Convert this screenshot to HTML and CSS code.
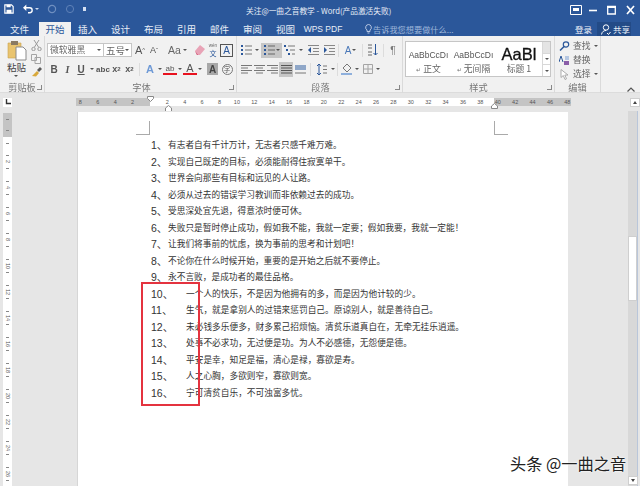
FILE: index.html
```html
<!DOCTYPE html>
<html lang="zh">
<head>
<meta charset="utf-8">
<title>Word</title>
<link rel="stylesheet" href="styles.css">
</head>
<body>
<div class="app">
  <header class="blue">
    <div class="titlebar">
      <div class="qat">
        <svg width="10" height="10" viewBox="0 0 12 12"><path d="M1 1h8l2 2v8H1z" fill="none" stroke="#fff" stroke-width="1.4"/><path d="M3 1h5v3H3zM3 7h6v4H3z" fill="#fff"/></svg>
        <svg class="q-undo" width="10" height="10" viewBox="0 0 12 11"><path d="M3 4h5a3 3 0 0 1 0 6H6" fill="none" stroke="#fff" stroke-width="1.6"/><path d="M0 4l4-4v8z" fill="#fff"/></svg>
        <span class="q-caret"></span>
        <svg class="q-redo" width="10" height="10" viewBox="0 0 10 10"><circle cx="5" cy="5" r="3.6" fill="none" stroke="#6f8fc0" stroke-width="1.2"/></svg>
        <svg class="q-rep" width="10" height="10" viewBox="0 0 10 10"><circle cx="5" cy="5" r="3.6" fill="none" stroke="#5f82b8" stroke-width="1"/></svg>
        <span class="q-more"></span>
      </div>
      <div class="doc-title">关注@一曲之音教学 - Word(产品激活失败)</div>
      <div class="winbtns">
        <svg width="12" height="10" viewBox="0 0 12 10"><path d="M.5.5h11v9H.5z" fill="none" stroke="#fff"/><path d="M3 3h6v3H3z" fill="#fff"/></svg>
        <svg width="8" height="10" viewBox="0 0 8 10"><path d="M0 5.5h8" stroke="#fff" stroke-width="1.6"/></svg>
        <svg width="9" height="10" viewBox="0 0 9 10"><path d="M.7 1.5h7.6v7.5H.7z" fill="none" stroke="#fff" stroke-width="1.3"/><path d="M0 1h9v2H0z" fill="#fff"/></svg>
        <svg width="9" height="10" viewBox="0 0 9 10"><path d="M1 1l7 8M8 1l-7 8" stroke="#fff" stroke-width="1.7"/></svg>
      </div>
    </div>
    <nav class="tabs">
      <span class="tab t-file">文件</span>
      <span class="tab active">开始</span>
      <span class="tab">插入</span>
      <span class="tab">设计</span>
      <span class="tab">布局</span>
      <span class="tab">引用</span>
      <span class="tab">邮件</span>
      <span class="tab">审阅</span>
      <span class="tab">视图</span>
      <span class="tab t-wps">WPS PDF</span>
      <span class="tell">
        <svg width="7" height="10" viewBox="0 0 7 10"><path d="M3.5.5a3 3 0 0 1 1.5 5.500v1.500H2V6A3 3 0 0 1 3.500.5zM2.500 9h2" fill="none" stroke="#c5d3ea" stroke-width=".9"/></svg>
        告诉我您想要做什么...
      </span>
      <span class="login">登录</span>
      <span class="share">
        <svg width="10" height="11" viewBox="0 0 10 11"><circle cx="5" cy="3.500" r="2.700" fill="none" stroke="#fff"/><path d="M.5 10.500C1 7.500 3 6.500 5 6.500M6 9l1.500 1.500L9.500 8" fill="none" stroke="#fff"/></svg>
        共享
      </span>
    </nav>
  </header>

  <section class="ribbon">
    <div class="group g-clip">
      <div class="clip-body">
        <div class="paste">
          <svg width="20" height="21" viewBox="0 0 20 21"><path d="M1 3h13v15H1z" fill="#e9c46f" stroke="#c9a24f" stroke-width=".6"/><path d="M4 1h7v4H4z" fill="#8a7a62"/><path d="M9 7h7l3 3v10H9z" fill="#fff" stroke="#8b8b8b"/></svg>
          <span>粘贴</span>
          <i class="caret"></i>
        </div>
        <div class="clip-tools">
          <svg width="11" height="11" viewBox="0 0 11 11"><path d="M3 0l4.500 7M8 0L3.500 7" stroke="#9a9a9a" fill="none"/><circle cx="2.500" cy="9" r="1.700" fill="none" stroke="#9a9a9a"/><circle cx="8.500" cy="9" r="1.700" fill="none" stroke="#9a9a9a"/></svg>
          <svg width="10" height="10" viewBox="0 0 10 10"><path d="M.5.500h5v6h-5zM4 3.500h5.500v6H4z" fill="#f4f4f4" stroke="#a5a5a5"/></svg>
          <svg width="11" height="10" viewBox="0 0 11 10"><path d="M1 9l5-5 2 2-3 3.500z" fill="#d9a93c"/><path d="M6 3l3-3 2 2-3 3z" fill="#5a5a5a"/></svg>
        </div>
      </div>
      <div class="g-label"><span></span><span>剪贴板</span><i class="launch"></i></div>
    </div>

    <div class="group g-font">
      <div class="rows">
        <div class="row">
          <div class="combo c-font">微软雅黑<i class="caret"></i></div>
          <div class="combo c-size">五号<i class="caret"></i></div>
          <span class="cell w14 tx big">A<sup>^</sup></span>
          <span class="cell w14 tx small">A<sup>ˇ</sup></span>
          <span class="cell w27 tx aa">Aa<i class="caret"></i></span>
          <span class="cell w13"><svg width="12" height="12" viewBox="0 0 12 12"><path d="M1 7l5-6 5 4-5 6H3z" fill="#e8a3b6"/><path d="M1 7l3 4H3z" fill="#c46"/></svg></span>
          <span class="cell w14 wen"><small>wén</small><span>文</span></span>
          <span class="cell w13 boxed">A</span>
        </div>
        <div class="row">
          <span class="cell w14 tx b">B</span>
          <span class="cell w13 tx it">I</span>
          <span class="cell w14 tx un">U</span>
          <span class="cell w8"><i class="caret"></i></span>
          <span class="cell w14 tx abc">abc</span>
          <span class="cell w13 tx sb">x<sub>2</sub></span>
          <span class="cell w13 tx sb">x<sup>2</sup></span>
          <span class="sep"></span>
          <span class="cell w14 tx fx">A</span>
          <span class="cell w6"><i class="caret"></i></span>
          <span class="cell w14 tx hl">ab</span>
          <span class="cell w6"><i class="caret"></i></span>
          <span class="cell w14 tx fc">A</span>
          <span class="cell w6"><i class="caret"></i></span>
          <span class="cell w13 tx gray">A</span>
          <span class="cell w14"><span class="circ">字</span></span>
        </div>
      </div>
      <div class="g-label"><span></span><span>字体</span><i class="launch"></i></div>
    </div>

    <div class="group g-para">
      <div class="rows">
        <div class="row">
          <span class="cell w14"><svg width="11" height="10" viewBox="0 0 11 10"><path d="M0 0h2v2H0zM0 4h2v2H0zM0 8h2v2H0z" fill="#2b579a"/><path d="M4 1h7M4 5h7M4 9h7" stroke="#777"/></svg></span>
          <span class="cell w8"><i class="caret"></i></span>
          <span class="cell w21 on"><svg width="11" height="10" viewBox="0 0 11 10"><path d="M0 0h2v2H0zM0 4h2v2H0zM0 8h2v2H0z" fill="#2b579a"/><path d="M4 1h7M4 5h7M4 9h7" stroke="#666"/></svg><i class="caret"></i></span>
          <span class="cell w15"><svg width="11" height="10" viewBox="0 0 11 10"><path d="M0 0h2v2H0zM2 4h2v2H2zM4 8h2v2H4z" fill="#2b579a"/><path d="M4 1h7M6 5h5M8 9h3" stroke="#777"/></svg></span>
          <span class="cell w8"><i class="caret"></i></span>
          <span class="cell w16"><svg width="11" height="10" viewBox="0 0 11 10"><path d="M0 5l3-3v6z" fill="#2b579a"/><path d="M0 .5h11M5 3.500h6M5 6.500h6M0 9.500h11" stroke="#888"/></svg></span>
          <span class="cell w16"><svg width="11" height="10" viewBox="0 0 11 10"><path d="M3 5L0 2v6z" fill="#2b579a"/><path d="M0 .5h11M5 3.500h6M5 6.500h6M0 9.500h11" stroke="#888"/></svg></span>
          <span class="sep sep-n"></span>
          <span class="cell w21 tx ab2">A<i class="caret"></i></span>
          <span class="sep sep-n"></span>
          <span class="cell w18"><svg width="10" height="12" viewBox="0 0 10 12"><path d="M7.500 0v11M5.500 9l2 2 2-2" fill="none" stroke="#2b579a"/><path d="M0 1h4M0 4h4M0 8h4M0 11h4" stroke="#666"/></svg></span>
          <span class="sep sep-n"></span>
          <span class="cell w16 tx pil">¶</span>
        </div>
        <div class="row">
          <span class="cell w14"><svg width="11" height="9" viewBox="0 0 11 9"><path d="M0 .5h11M0 3h7M0 5.500h11M0 8h7" stroke="#777"/></svg></span>
          <span class="cell w13"><svg width="11" height="9" viewBox="0 0 11 9"><path d="M0 .5h11M2 3h7M0 5.500h11M2 8h7" stroke="#777"/></svg></span>
          <span class="cell w13"><svg width="11" height="9" viewBox="0 0 11 9"><path d="M0 .5h11M4 3h7M0 5.500h11M4 8h7" stroke="#777"/></svg></span>
          <span class="cell w14 on"><svg width="11" height="9" viewBox="0 0 11 9"><path d="M0 .5h11M0 3h11M0 5.500h11M0 8h11" stroke="#555"/></svg></span>
          <span class="cell w14"><svg width="11" height="9" viewBox="0 0 11 9"><path d="M0 0h11v5H0z" fill="#8fa7c8"/><path d="M0 8h11" stroke="#777"/></svg></span>
          <span class="sep"></span>
          <span class="cell w16"><svg width="10" height="11" viewBox="0 0 10 11"><path d="M2 0v11M0 2l2-2 2 2M0 9l2 2 2-2" fill="none" stroke="#2b579a"/><path d="M6 2h4M6 5.500h4M6 9h4" stroke="#777"/></svg></span>
          <span class="cell w6"><i class="caret"></i></span>
          <span class="sep sep-n"></span>
          <span class="cell w14"><svg width="11" height="12" viewBox="0 0 11 12"><path d="M2 5l4-4 4 4-4 4z" fill="none" stroke="#777"/><path d="M0 10h11v2H0z" fill="#8fb0dc"/></svg></span>
          <span class="cell w8"><i class="caret"></i></span>
          <span class="cell w13"><svg width="10" height="10" viewBox="0 0 10 10"><path d="M.5.500h9v9h-9zM5 .5v9M.5 5h9" fill="none" stroke="#a5a5a5"/></svg></span>
          <span class="cell w8"><i class="caret"></i></span>
        </div>
      </div>
      <div class="g-label"><span></span><span>段落</span><i class="launch"></i></div>
    </div>

    <div class="group g-style">
      <div class="gallery">
        <div class="g-items">
          <div class="g-item"><span class="aa-s">AaBbCcDı</span><span class="g-name"><em>↵</em>正文</span></div>
          <div class="g-item"><span class="aa-s">AaBbCcDı</span><span class="g-name"><em>↵</em>无间隔</span></div>
          <div class="g-item"><span class="aa-b">AaBl</span><span class="g-name">标题 1</span></div>
        </div>
        <div class="g-scroll">
          <span class="g-up"></span><span><i class="caret"></i></span><span class="g-more"><i class="caret"></i></span>
        </div>
      </div>
      <div class="g-label"><span></span><span>样式</span><i class="launch"></i></div>
    </div>

    <div class="group g-edit">
      <div class="edit-rows">
        <div class="ed"><svg width="10" height="10" viewBox="0 0 10 10"><circle cx="6.500" cy="3.500" r="2.700" fill="none" stroke="#2b579a" stroke-width="1.200"/><path d="M4.500 5.500L.5 9.500" stroke="#2b579a" stroke-width="1.500"/></svg><span>查找</span><i class="caret"></i></div>
        <div class="ed"><svg width="11" height="11" viewBox="0 0 11 11"><path d="M0 7l2-6 2 6" fill="none" stroke="#2b579a"/><path d="M6 1h4v4H6z" fill="#b5c7e2"/><path d="M5 6h5v4H5z" fill="#8b5ea8"/></svg><span>替换</span></div>
        <div class="ed"><svg width="9" height="11" viewBox="0 0 9 11"><path d="M1 .5v8l2.300-2 1.700 4 1.500-.7-1.700-3.800H8z" fill="#fff" stroke="#999" stroke-width=".8"/></svg><span>选择</span><i class="caret"></i></div>
      </div>
      <div class="g-label g-label-c">编辑</div>
    </div>
    <div class="ribbon-end"><svg width="8" height="5" viewBox="0 0 8 5"><path d="M.5 4.500L4 1l3.500 3.500" fill="none" stroke="#555" stroke-width="1.200"/></svg></div>
  </section>

  <div class="ruler-row">
    <span class="tabstop"><svg width="6" height="6" viewBox="0 0 6 6"><path d="M1.500 0v4.500H6" fill="none" stroke="#333" stroke-width="1.400"/></svg></span>
    <div class="ruler">
      <div class="ruler-nums">
        <span>8</span><span>6</span><span>4</span><span>2</span><span></span><span>2</span><span>4</span><span>6</span><span>8</span><span>10</span><span>12</span><span>14</span><span>16</span><span>18</span><span>20</span><span>22</span><span>24</span><span>26</span><span>28</span><span>30</span><span>32</span><span>34</span><span>36</span><span>38</span><span>40</span><span>42</span><span>44</span><span>46</span><span>48</span>
      </div>
      <svg class="m-top" width="7" height="6" viewBox="0 0 7 6"><path d="M.5.500h6v2L3.500 5.500.5 2.500z" fill="#fff" stroke="#888"/></svg>
      <svg class="m-bot" width="7" height="7" viewBox="0 0 7 7"><path d="M.5 3L3.500.5 6.500 3v3.500h-6z" fill="#fff" stroke="#888"/></svg>
      <svg class="m-right" width="7" height="6" viewBox="0 0 7 6"><path d="M.5 3L3.500.5 6.500 3v2.500h-6z" fill="#fff" stroke="#888"/></svg>
    </div>
    <span class="sb-btn"><i class="up"></i></span>
  </div>

  <main class="work">
    <aside class="vruler">
      <span class="v-gray"></span>
      <span class="v-blank"></span>
      <span>2</span><span>4</span><span>6</span><span>8</span><span>10</span><span>12</span><span>14</span><span>16</span><span>18</span><span>20</span><span>22</span><span>24</span><span>26</span>
    </aside>
    <article class="page">
      <div class="crops"><i class="crop-l"></i><i class="crop-r"></i></div>
      <ol class="list">
        <li><b>1、</b>有志者自有千计万计，无志者只感千难万难。</li>
        <li><b>2、</b>实现自己既定的目标，必须能耐得住寂寞单干。</li>
        <li><b>3、</b>世界会向那些有目标和远见的人让路。</li>
        <li><b>4、</b>必须从过去的错误学习教训而非依赖过去的成功。</li>
        <li><b>5、</b>受思深处宜先退，得意浓时便可休。</li>
        <li><b>6、</b>失败只是暂时停止成功，假如我不能，我就一定要；假如我要，我就一定能！</li>
        <li><b>7、</b>让我们将事前的忧虑，换为事前的思考和计划吧！</li>
        <li><b>8、</b>不论你在什么时候开始，重要的是开始之后就不要停止。</li>
        <li><b>9、</b>永不言败，是成功者的最佳品格。</li>
        <li class="wide"><b>10、</b>一个人的快乐，不是因为他拥有的多，而是因为他计较的少。</li>
        <li class="wide"><b>11、</b>生气，就是拿别人的过错来惩罚自己。原谅别人，就是善待自己。</li>
        <li class="wide"><b>12、</b>未必钱多乐便多，财多累己招烦恼。清贫乐道真自在，无牵无挂乐逍遥。</li>
        <li class="wide"><b>13、</b>处事不必求功，无过便是功。为人不必感德，无怨便是德。</li>
        <li class="wide"><b>14、</b>平安是幸，知足是福，清心是禄，寡欲是寿。</li>
        <li class="wide"><b>15、</b>人之心胸，多欲则窄，寡欲则宽。</li>
        <li class="wide"><b>16、</b>宁可清贫自乐，不可浊富多忧。</li>
      </ol>
    </article>
    <div class="vscroll">
      <span class="thumb"></span>
      <span class="sb-btn sb-down"><i class="down"></i></span>
    </div>
    <div class="redbox"></div>
    <div class="watermark">头条 @一曲之音</div>
  </main>
</div>
</body>
</html>
```

FILE: styles.css
```css
* { box-sizing: border-box; }
html, body { margin: 0; padding: 0; }
body {
  width: 640px; height: 486px; overflow: hidden;
  font-family: "Noto Sans CJK SC", "Liberation Sans", sans-serif;
  color: #444; background: #e6e6e6;
}
.app { width: 640px; height: 486px; display: flex; flex-direction: column; overflow: hidden; filter: blur(.35px); }
i, em { font-style: normal; }

/* title + tabs */
.blue { background: #2b579a; color: #fff; height: 36px; flex: none; }
.titlebar { height: 22px; display: grid; grid-template-columns: 246px 1fr auto; align-items: center; }
.qat { display: flex; align-items: center; padding: 0 0 4px 4px; }
.q-undo { margin-left: 9px; }
.q-caret { width: 0; height: 0; border: 2px solid transparent; border-top: 2.500px solid #cfdcf0; margin: 2px 0 0 2px; }
.q-redo { margin-left: 8px; }
.q-rep { margin-left: 8px; }
.q-more { width: 3px; height: 4px; background: #d5e0f2; margin-left: 8px; }
.doc-title { font-size: 7.700px; line-height: 12px; color: #e6ecf6; white-space: nowrap; }
.winbtns { display: flex; align-items: center; gap: 10px; padding: 0 5px 3px 0; }
.winbtns svg:first-child { margin-right: -3px; }

.tabs { height: 14px; display: flex; align-items: stretch; font-size: 9.500px; line-height: 14px; color: #e8eef7; }
.tab { width: 33px; text-align: center; white-space: nowrap; }
.t-file { width: 39px; }
.tab.active { width: 32px; background: #f1f1f1; color: #2b579a; }
.t-wps { width: 50px; padding: 0 8px 0 0; font-family: "Liberation Sans", sans-serif; font-size: 8.500px; }
.tell { display: flex; align-items: center; gap: 1px; margin-left: 13px; width: 210px; color: #9fb7da; font-size: 8.200px; white-space: nowrap; }
.login { width: 22px; font-size: 8.500px; text-align: left; color: #f2f5fa; white-space: nowrap; }
.share { width: 34px; display: flex; align-items: center; gap: 2px; background: #234b87; padding-left: 4px; font-size: 8.500px; white-space: nowrap; }

/* ribbon */
.ribbon { height: 57px; flex: none; background: #f1f1f1; display: flex; border-bottom: 1px solid #dcdcdc; font-size: 9.500px; }
.group { display: flex; flex-direction: column; justify-content: space-between; border-right: 1px solid #dadada; margin-bottom: -1px; }
.g-clip { width: 45px; }
.g-font { width: 192px; padding-left: 2px; }
.g-para { width: 166px; padding-left: 2px; }
.g-style { width: 152px; }
.g-edit { width: 46px; }
.ribbon-end { flex: 1; display: flex; align-items: flex-end; justify-content: flex-end; padding: 0 5px 0 0; }
.g-label { height: 12px; line-height: 12px; font-size: 9.200px; color: #777; display: grid; grid-template-columns: 1fr auto 1fr; align-items: center; white-space: nowrap; }
.g-label-c { display: block; text-align: center; }
.launch { justify-self: end; margin-right: 2px; width: 5px; height: 5px; border-left: 1px solid #888; border-bottom: 1px solid #888; transform: scaleX(-1); }

.caret { display: inline-block; width: 0; height: 0; border: 2px solid transparent; border-top: 2.500px solid #555; border-bottom: 0; }

.clip-body { display: flex; padding: 4px 0 0 7px; gap: 3px; }
.paste { width: 21px; display: flex; flex-direction: column; align-items: flex-start; font-size: 9.500px; line-height: 12px; color: #444; }
.paste .caret { margin: 2px 0 0 7px; }
.clip-tools { display: flex; flex-direction: column; gap: 3px; }

.rows { display: flex; flex-direction: column; gap: 5px; padding-top: 7px; }
.row { display: flex; align-items: center; height: 14px; }
.cell { height: 15px; display: flex; align-items: center; justify-content: center; flex: none; }
.w6 { width: 6px; } .w8 { width: 8px; } .w13 { width: 13px; } .w14 { width: 14px; } .w15 { width: 15px; } .w16 { width: 16px; }
.w18 { width: 18px; } .w21 { width: 21px; gap: 1px; } .w27 { width: 27px; gap: 2px; margin-left: 5px; justify-content: flex-start; padding-left: 2px; }
.sep { width: 1px; height: 13px; background: #dcdcdc; margin: 0 3px; flex: none; }
.sep-n { margin: 0 1px; }
.on { background: #c6c6c6; }
.combo { height: 14px; background: #fff; border: 1px solid #c6c6c6; display: flex; align-items: center; justify-content: space-between; padding: 0 2px; font-size: 8.800px; line-height: 12px; white-space: nowrap; color: #666; flex: none; }
.c-font { width: 57px; }
.c-size { width: 29px; margin-left: -1px; font-size: 9.500px; margin-right: 1px; }
.tx { font-family: "Liberation Sans", sans-serif; color: #555; font-size: 10px; }
.tx sup, .tx sub { font-size: 6px; line-height: 6px; }
.big { font-size: 11px; }
.small { font-size: 9px; }
.aa { font-size: 10.500px; color: #666; }
.wen { flex-direction: column; font-size: 7px; line-height: normal; color: #2b579a; justify-content: center; }
.wen small { font-size: 4.500px; line-height: normal; color: #666; font-family: "Liberation Sans", sans-serif; }
.boxed { border: 1px solid #555; font-family: "Liberation Sans", sans-serif; font-size: 10px; height: 13px; color: #2b579a; }
.b { font-weight: 700; }
.it { font-style: italic; font-family: "Liberation Serif", serif; font-weight: 700; }
.un { text-decoration: underline; font-weight: 700; }
.abc { font-size: 8px; font-weight: 700; }
.sb { font-size: 9px; font-weight: 700; }
.fx { color: #6f9ad6; font-size: 11px; font-weight: 700; }
.hl { font-size: 8px; color: #555; border-bottom: 2.500px solid #e8121f; height: 12px; line-height: 9px; }
.fc { font-size: 11px; color: #555; border-bottom: 2.500px solid #e8121f; height: 12px; line-height: 9px; }
.gray { background: #a8a8a8; color: #444; font-weight: 700; height: 12px; width: 11px; margin: 0 2px 0 4px; }
.circ { width: 11px; height: 11px; border: 1px solid #777; border-radius: 50%; font-size: 6.500px; line-height: 9px; text-align: center; color: #555; overflow: hidden; }
.ab2 { font-size: 10px; color: #4a78b8; }
.pil { font-size: 10px; color: #777; }

.gallery { display: flex; height: 36px; margin: 5px 0 0 2px; width: 146px; border: 1px solid #c6c6c6; background: #fff; }
.g-items { flex: 1; display: flex; padding-top: 2px; overflow: hidden; }
.g-item { display: flex; flex-direction: column; align-items: center; width: 45px; }
.g-item:last-child { width: 46px; overflow: hidden; }
.aa-s { height: 19px; line-height: 22px; font-family: "Liberation Sans", sans-serif; font-size: 8.500px; color: #555; white-space: nowrap; }
.aa-b { height: 19px; line-height: 20px; font-family: "Liberation Sans", sans-serif; font-size: 16.500px; color: #111; white-space: nowrap; -webkit-text-stroke: .3px #111; }
.g-name { font-size: 8.800px; line-height: 12px; color: #666; white-space: nowrap; }
.g-name em { font-size: 6px; margin-right: 2px; color: #777; }
.g-scroll { width: 8px; border-left: 1px solid #d8d8d8; display: flex; flex-direction: column; }
.g-scroll span { flex: 1; display: flex; align-items: center; justify-content: center; border-bottom: 1px solid #d8d8d8; }
.g-scroll span:last-child { border-bottom: 0; }
.g-up { background: #e4e4e4; }

.edit-rows { display: flex; flex-direction: column; padding: 4px 0 0 4px; gap: 2px; }
.ed { display: flex; align-items: center; height: 12px; gap: 3px; line-height: 12px; font-size: 8.800px; color: #666; white-space: nowrap; }
.ed svg { width: 11px; }

/* ruler */
.ruler-row { height: 18px; flex: none; display: flex; align-items: center; background: #e6e6e6; }
.tabstop { width: 9px; height: 9px; margin-left: 3px; background: #fff; display: flex; align-items: center; justify-content: center; }
.ruler {
  width: 495px; height: 8px; margin-left: 64px; position: relative;
  background: linear-gradient(to right, #c4c4c4 74px, #fff 74px, #fff 418px, #c4c4c4 418px);
}
.ruler-nums { display: flex; margin-left: -4.300px; font-family: "Liberation Sans", sans-serif; font-size: 5.500px; line-height: 8px; color: #555; }
.ruler-nums span { width: 17.400px; flex: none; text-align: center; }
.m-top { position: absolute; left: 71px; top: -2px; }
.m-bot { position: absolute; left: 89px; top: 7px; }
.m-right { position: absolute; left: 415px; top: 5px; }
.sb-btn { width: 10px; height: 9px; background: #fff; border: 1px solid #cfcfcf; margin-left: 59px; display: flex; align-items: center; justify-content: center; flex: none; }
.up { width: 0; height: 0; border: 2px solid transparent; border-bottom: 3px solid #444; border-top: 0; }
.down { width: 0; height: 0; border: 2px solid transparent; border-top: 3px solid #444; border-bottom: 0; }

/* workspace */
.work { flex: 1; display: flex; position: relative; background: #e6e6e6; min-height: 0; }
.vruler {
  width: 9px; margin: 2px 0 0 3px; flex: none; background: #fff; display: flex; flex-direction: column;
  font-family: "Liberation Sans", sans-serif; font-size: 5.500px; color: #555;
}
.vruler span {
  height: 26px; flex: none; display: flex; align-items: center; justify-content: center;
  writing-mode: vertical-rl; line-height: 9px; position: relative;
}
.vruler span::before, .vruler span::after { content: ""; position: absolute; left: 3px; width: 3px; height: 1px; background: #888; }
.vruler span::before { top: 6px; }
.vruler span::after { bottom: 6px; }
.vruler .v-gray { background: #c4c4c4; height: 24px; }
.vruler .v-blank { height: 12px; }
.vruler .v-blank::after { display: none; }

.page { width: 491px; margin: 1px 0 0 65px; flex: none; background: #fff; border-left: 1px solid #d6d6d6; padding: 9px 0 0 58px; }
.crops { width: 372px; height: 14px; display: flex; justify-content: space-between; }
.crop-l { width: 14px; height: 14px; border-right: 1px solid #aaa; border-bottom: 1px solid #aaa; }
.crop-r { width: 14px; height: 14px; border-left: 1px solid #aaa; border-bottom: 1px solid #aaa; }
.list { list-style: none; margin: 2px 0 0; padding: 0 0 0 15px; font-size: 8.700px; color: #333; }
.list li { height: 16.530px; line-height: 16px; display: flex; white-space: nowrap; }
.list b { width: 17px; flex: none; font-weight: 400; font-family: "Liberation Sans", "Noto Sans CJK SC", sans-serif; font-size: 10.500px; white-space: nowrap; }
.list .wide b { width: 35px; }

.vscroll { width: 10px; margin: 0 0 0 60px; background: #d8d8d8; flex: none; display: flex; flex-direction: column; justify-content: space-between; align-items: stretch; border-right: 1px solid #b9c6da; }
.thumb { height: 65px; margin-top: 125px; background: #fff; border: 1px solid #cfcfcf; }
.sb-down { margin: 0 0 1px 0; }

.redbox { position: absolute; left: 141px; top: 171px; width: 59px; height: 124px; border: 2px solid #e4333f; }
.watermark { position: absolute; left: 510px; top: 341px; font-size: 16.200px; line-height: 22px; color: #222; white-space: nowrap; text-shadow: 0 0 2px #fff, 0 0 2px #fff; }
```
